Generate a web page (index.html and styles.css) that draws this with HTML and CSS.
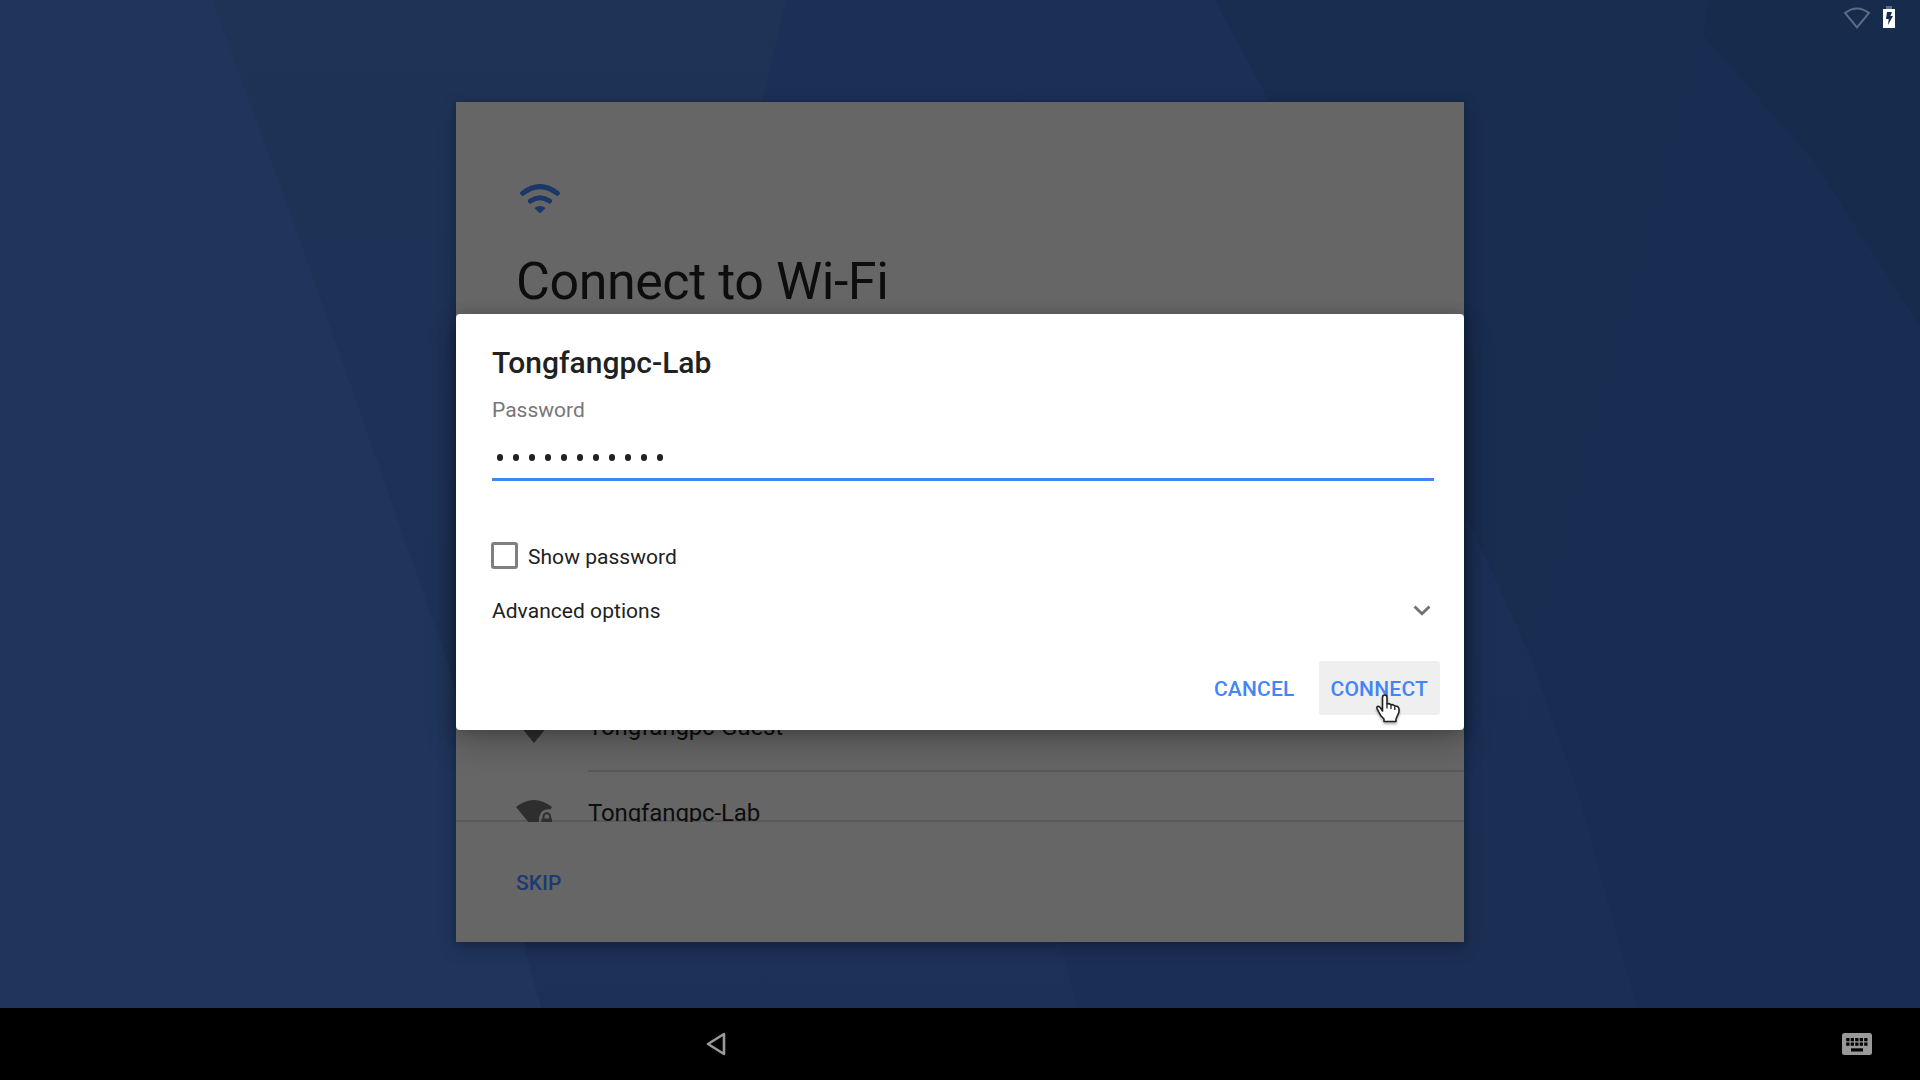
FILE: index.html
```html
<!DOCTYPE html>
<html lang="en">
<head>
<meta charset="utf-8">
<title>Connect to Wi-Fi</title>
<link rel="stylesheet" href="styles.css">
</head>
<body>
<div class="screen">
  <main class="desktop">
    <svg class="wallpaper" viewBox="0 0 1920 1008" aria-hidden="true">
      <defs>
        <linearGradient id="g1" x1="0" y1="0" x2="0" y2="1"><stop offset="0" stop-color="#20355b"/><stop offset="1" stop-color="#20355c"/></linearGradient>
        <linearGradient id="g2" x1="0" y1="0" x2="0" y2="1"><stop offset="0" stop-color="#1f3356"/><stop offset="1" stop-color="#1d3058"/></linearGradient>
        <linearGradient id="g3" x1="0" y1="0" x2="0" y2="1"><stop offset="0" stop-color="#1c2f57"/><stop offset="1" stop-color="#1b2f55"/></linearGradient>
      </defs>
      <path fill="url(#g1)" d="M0 0H1920V1008H0z"/>
      <path fill="url(#g2)" d="M212 0H1920V1008H541L447 661L300 241z"/>
      <path fill="url(#g3)" d="M786 0H1920V1008H1078L1059 942L740 220L762 102z"/>
      <path fill="#192c52" d="M1215 0H1920V1008H1637L1579 796L1531 657L1495 577L1270 102z"/>
      <path fill="#192d50" d="M1215 0H1709L1704 35L1531 657L1495 577L1270 102z"/>
      <path fill="#172b4d" d="M1709 0H1920V326L1814 161L1704 35z"/>
    </svg>
    <header class="status">
      <svg width="28" height="24" viewBox="0 0 28 24"><path d="M2 7Q14-2 26 7L14 21.500z" fill="none" stroke="#5d6b84" stroke-width="2"/></svg>
      <svg width="12" height="22" viewBox="0 0 12 22"><path fill="#5d6b84" d="M3 0h6v4H3z"/><path fill="#fff" d="M0 3h12v19H0z"/><path fill="#172b4d" d="M4 6h5L7.500 10H10L5 19l.7-6H3z"/></svg>
    </header>
    <section class="card">
      <div class="intro">
        <svg class="wifi" width="40" height="30" viewBox="0 0 40 30"><g fill="none" stroke="#1b3767" stroke-width="5" stroke-linecap="round"><path d="M2.700 9.300Q20-4 37.300 9.300"/><path d="M10.500 17Q20 10.500 29.500 17"/></g><path fill="#1b3767" d="M14.500 24Q20 20 25.500 24L21.200 28.500Q20 29.700 18.800 28.500z"/></svg>
        <h1>Connect to Wi-Fi</h1>
      </div>
      <div class="networks">
        <div class="network">
          <svg width="36" height="29" viewBox="0 0 36 29"><path fill="#2e2e2e" d="M0 7Q18-7 36 7L18 29z"/></svg>
          <span>Tongfangpc-Guest</span>
        </div>
        <div class="network">
          <svg width="36" height="29" viewBox="0 0 36 29"><path fill="#2e2e2e" d="M0 7Q18-7 36 7L34.500 9.500C27 8.500 23 13 23 21L18 29z"/><path fill="none" stroke="#2e2e2e" stroke-width="2" d="M27.500 19v-2.500a3.300 3.300 0 0 1 6.600 0V19"/><path fill="#2e2e2e" d="M25.500 18.500H36v9H25.500z"/></svg>
          <span>Tongfangpc-Lab</span>
        </div>
      </div>
      <footer class="skip">SKIP</footer>
    </section>
    <section class="dialog">
      <h2>Tongfangpc-Lab</h2>
      <div class="label">Password</div>
      <div class="field"><i></i><i></i><i></i><i></i><i></i><i></i><i></i><i></i><i></i><i></i><i></i></div>
      <div class="show"><span class="check"></span><span class="text">Show password</span></div>
      <div class="advanced"><span class="text">Advanced options</span><svg width="18" height="11" viewBox="0 0 18 11"><path d="M1.500 1.500L9 8.800L16.500 1.500" fill="none" stroke="#737373" stroke-width="2.800"/></svg></div>
      <div class="actions"><span class="button">CANCEL</span><span class="button hover">CONNECT</span></div>
    </section>
    <svg class="cursor" width="32" height="36" viewBox="0 0 32 36"><path fill="#fff" stroke="#222" stroke-width="1.600" stroke-linejoin="round" d="M10.500 19V5.500Q10.500 3 12.800 3Q15 3 15 5.500V12Q17 11 19 12.800Q21 12 22.700 14Q26.500 13.500 27 17V20L24 27V29.500H12V27Q8 23.500 6 18.500Q4 15.500 5.500 14.500Q7.500 13.500 10.500 19z"/><path fill="none" stroke="#222" stroke-width="1.300" d="M15 11.500v5M19 13v4M22.800 14.500v3.500"/></svg>
  </main>
  <nav class="navbar">
    <svg width="20" height="24" viewBox="0 0 20 24"><path d="M2 12L18 2V22z" fill="none" stroke="#999" stroke-width="2.600" stroke-linejoin="round"/></svg>
    <svg width="30" height="22" viewBox="0 0 30 22"><rect width="30" height="22" rx="2.500" fill="#999"/><path stroke="#000" stroke-width="3.200" stroke-dasharray="3.300 1.200" d="M4.200 6.600H25.800M4.200 11.200H25.800"/><path fill="#000" d="M9 15.300h12v3.200H9z"/></svg>
  </nav>
</div>
</body>
</html>
```
FILE: styles.css
```css
* { box-sizing: border-box; }
body { margin: 0; font-family: Roboto, sans-serif; }
svg { display: block; flex: none; }
h1, h2 { margin: 0; white-space: nowrap; }
.screen { width: 1920px; height: 1080px; display: flex; flex-direction: column; overflow: hidden; background: #000; }
.desktop { position: relative; height: 1008px; display: flex; flex-direction: column; align-items: center; }
.wallpaper { position: absolute; inset: 0; width: 1920px; height: 1008px; }
.status { position: relative; width: 100%; height: 102px; display: flex; justify-content: flex-end; gap: 12px; padding: 6px 25px 0 0; }
.card { position: relative; width: 1008px; height: 840px; display: flex; flex-direction: column; background: #666; color: #0d0d0d; box-shadow: 0 6px 16px rgba(0,0,0,.25), 0 0 6px rgba(0,0,0,.15); }
.intro { flex: none; height: 518px; padding: 82px 60px 0; }
.wifi { margin-left: 4px; }
h1 { margin-top: 32px; font-size: 52px; line-height: 72px; font-weight: 400; letter-spacing: -.43px; }
.networks { flex: none; height: 202px; overflow: hidden; background: linear-gradient(#595959, #595959) bottom / 100% 2px no-repeat; }
.network { height: 86px; display: flex; align-items: center; padding-left: 60px; gap: 36px; font-size: 24px; letter-spacing: -.12px; }
.network:first-child { margin-top: 66px; }
.network svg { margin-bottom: 1px; }
.network span { flex: 1; height: 86px; line-height: 82px; border-bottom: 2px solid #595959; }
.skip { flex: none; height: 120px; padding-left: 60px; line-height: 123px; font-size: 21px; font-weight: 500; color: #1b3a72; }
.dialog { position: absolute; top: 314px; left: 456px; width: 1008px; height: 416px; padding: 30px 24px 0 36px; display: flex; flex-direction: column; border-radius: 4px; background: #fff; color: #212121; box-shadow: 0 16px 32px rgba(0,0,0,.2), 0 2px 16px rgba(0,0,0,.22); font-size: 21px; }
h2 { font-size: 30px; line-height: 38px; font-weight: 500; }
.label { height: 34px; margin-top: 11px; line-height: 34px; color: #777; }
.field { width: 942px; height: 54px; display: flex; align-items: center; gap: 10px; padding: 9px 0 0 5px; border-bottom: 3px solid #4285f4; }
.field i { width: 6px; height: 7px; border-radius: 3px; background: #212121; }
.show { height: 36px; display: flex; align-items: center; gap: 10px; margin-top: 57px; }
.text { padding-top: 2px; letter-spacing: .04px; }
.check { width: 27px; height: 27px; margin: -1px 0 0 -1px; border: 3px solid #7f7f7f; border-radius: 3px; }
.advanced { height: 36px; display: flex; align-items: center; justify-content: space-between; margin-top: 18px; padding-right: 9px; }
.actions { display: flex; justify-content: flex-end; margin-top: 33px; gap: 12px; }
.button { height: 54px; padding: 0 12px; line-height: 57px; font-weight: 500; letter-spacing: .2px; color: #4285f4; border-radius: 3px; }
.hover { background: #efefef; }
.cursor { position: absolute; left: 1372px; top: 692px; filter: drop-shadow(0 2px 1px rgba(0,0,0,.3)); }
.navbar { height: 72px; display: flex; align-items: center; justify-content: space-between; padding: 0 48px 0 706px; background: #000; }
```
